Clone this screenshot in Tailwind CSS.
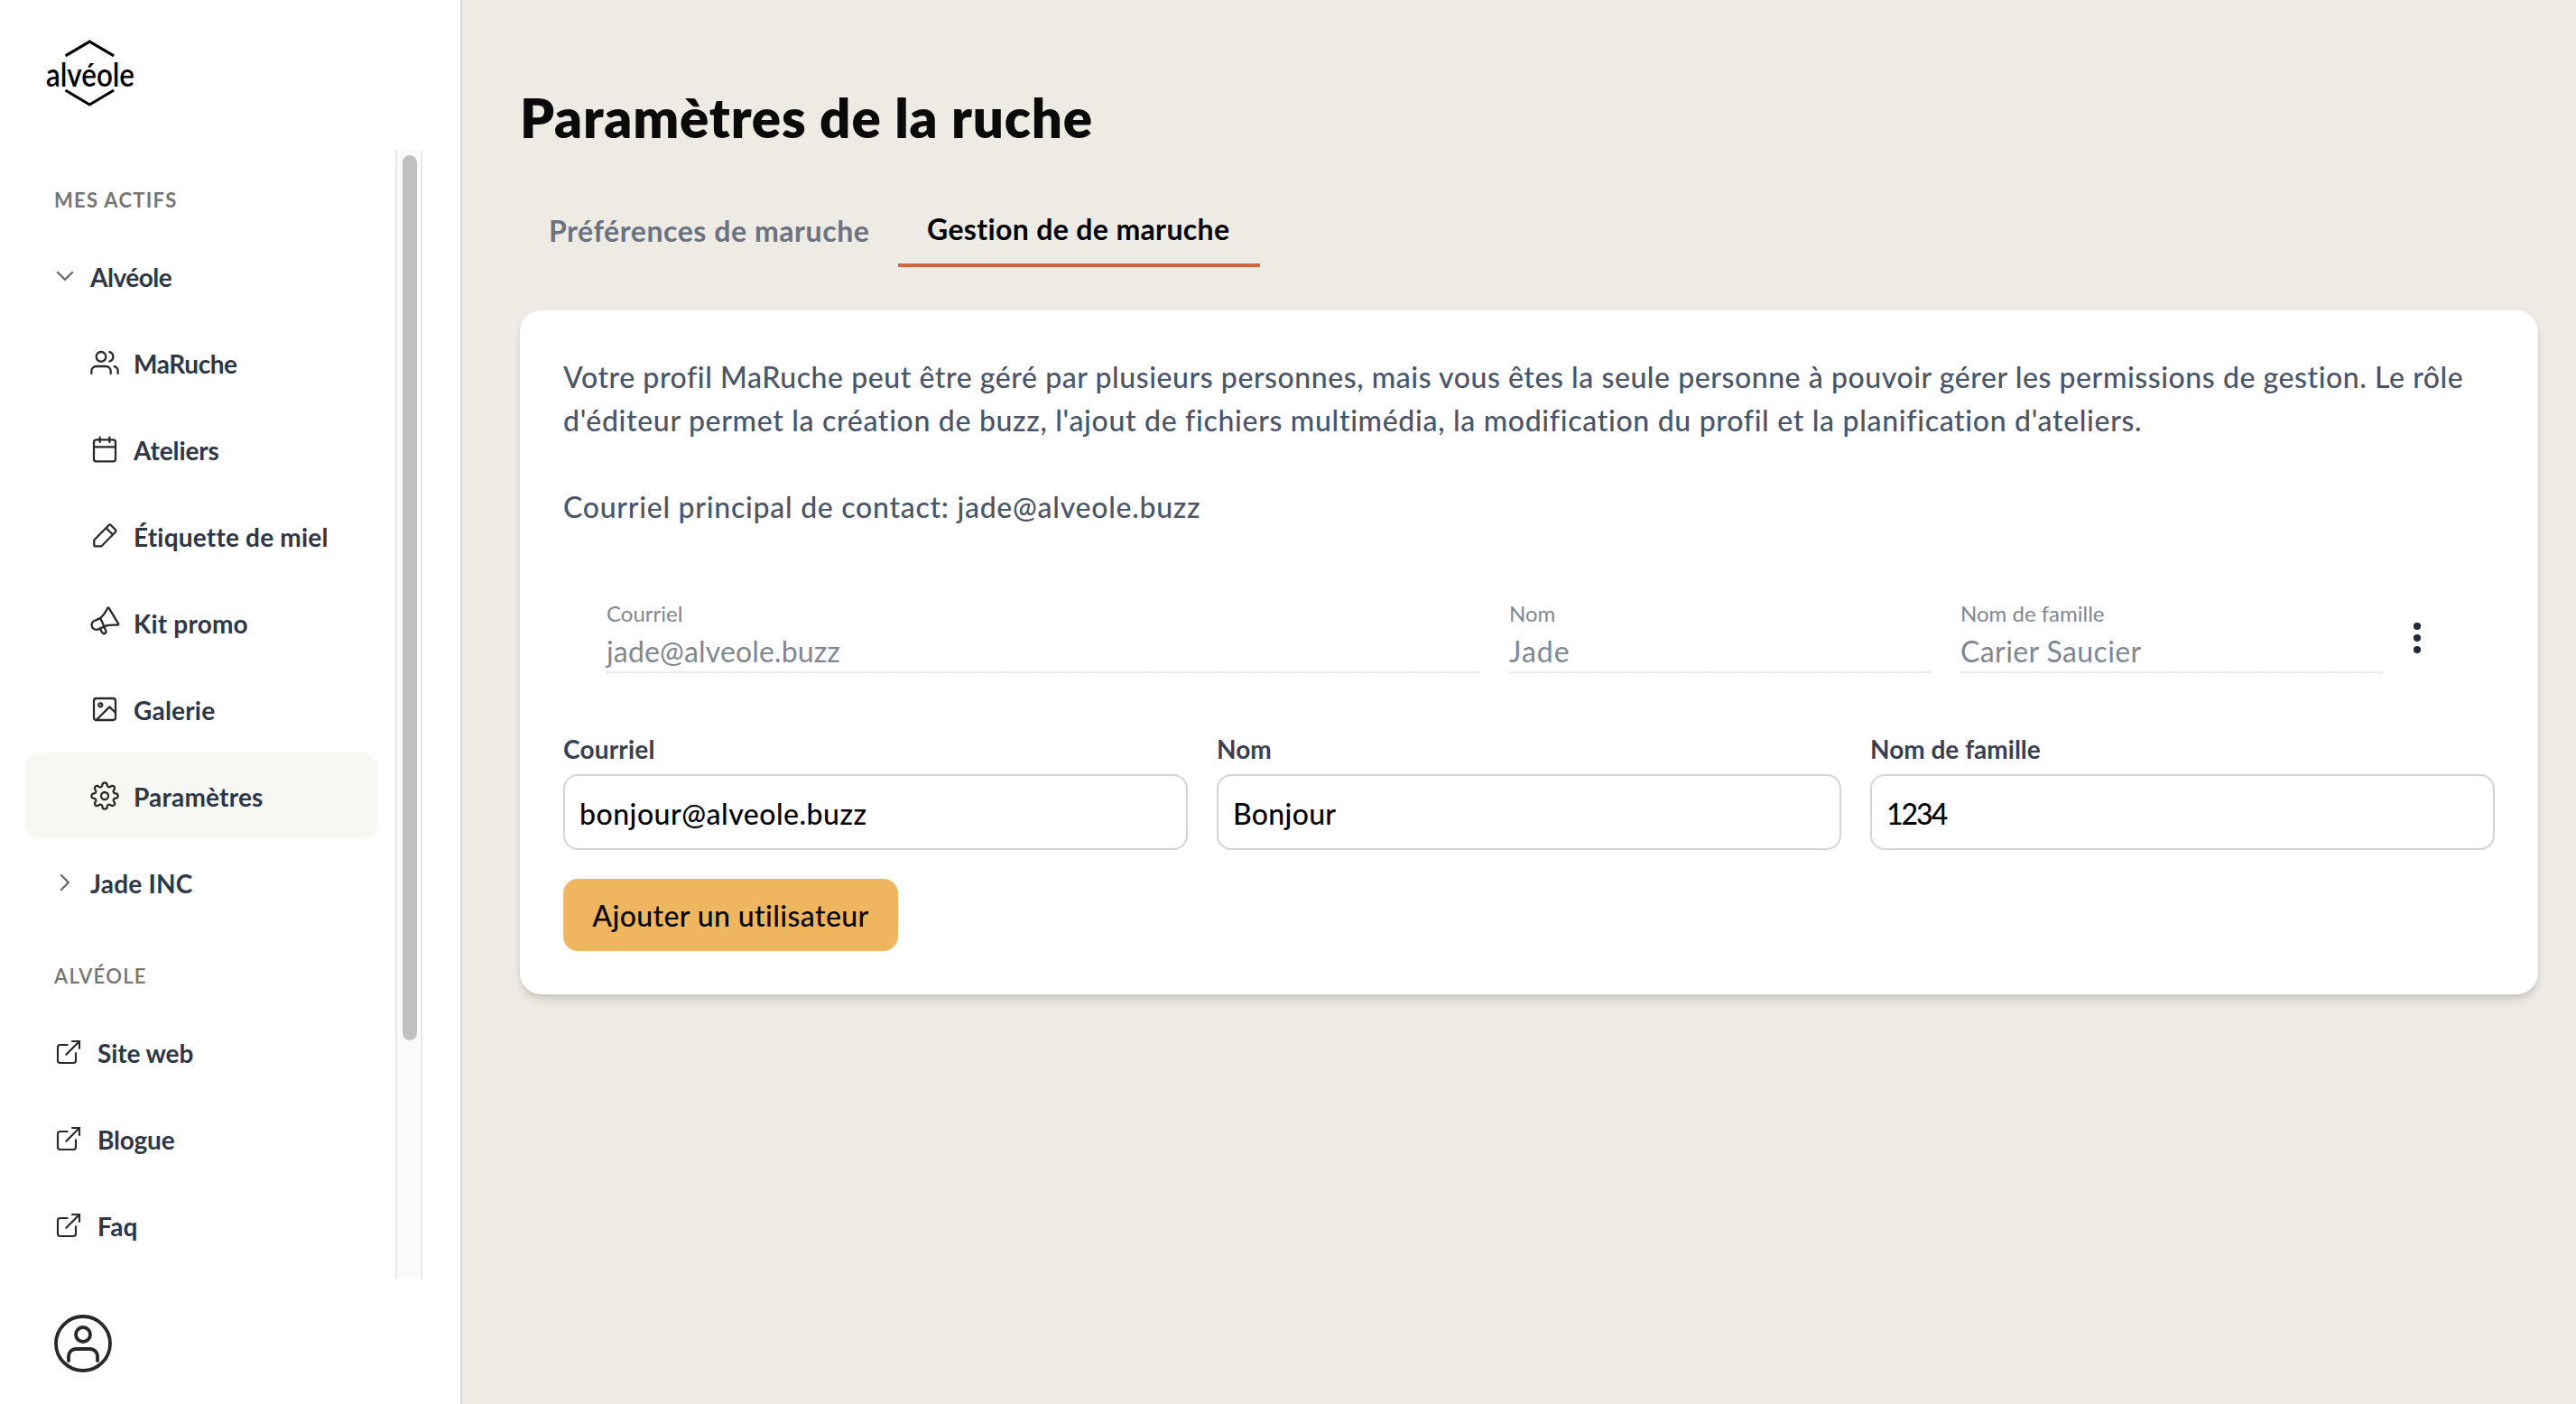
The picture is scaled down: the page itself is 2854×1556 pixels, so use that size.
<!DOCTYPE html>
<html lang="fr">
<head>
  <meta charset="UTF-8" />
  <meta name="viewport" content="width=device-width, initial-scale=1.0" />
  <title>Paramètres de la ruche</title>
  <script src="https://cdn.jsdelivr.net/npm/@tailwindcss/browser@4"></script>
</head>
<body class="flex h-screen overflow-hidden bg-[#eeebe4] font-['Lato',sans-serif]">

  <!-- Sidebar -->
  <aside class="flex flex-col w-[512px] h-full shrink-0 bg-white border-r-2 border-[#d9d9d9]">
    <div class="h-[166px] shrink-0 pl-12 pt-10">
      <svg class="w-[104px] h-20 overflow-visible" viewBox="0 0 104 80" fill="none" stroke="#000" stroke-width="3.2">
        <path d="M24.5 21.8 51.3 6l26.8 15.8M24.5 60 51.3 76l26.8-16" />
        <text x="3" y="56" font-size="36" font-weight="600" fill="#000" stroke="none" textLength="98" lengthAdjust="spacingAndGlyphs">alvéole</text>
      </svg>
    </div>

    <div class="flex h-[1251px] shrink-0">
      <nav class="w-[438px] pl-7 pr-5 text-[28px] font-bold text-[#2d3748] tracking-[0.2px] [&_a]:pt-0.5 [&_svg]:-mt-0.5">
        <h2 class="h-[92px] pt-10 pl-8 text-[22px] leading-8 font-bold text-[#757575] tracking-[1.3px]">MES ACTIFS</h2>
        <a class="flex items-center h-24 pl-8 gap-4 tracking-[-0.5px]">
          <svg class="size-6" viewBox="0 0 24 24" fill="none" stroke="#6b6b6b" stroke-width="2.3"><path d="m3.3 7.2 8.7 8.6 8.7-8.6" /></svg>
          Alvéole
        </a>
        <a class="flex items-center h-24 pl-18 gap-4 tracking-[-0.4px]">
          <svg class="size-8" viewBox="0 0 24 24" fill="none" stroke="#282828" stroke-width="1.7" stroke-linecap="round" stroke-linejoin="round"><path d="M17 21v-2a4 4 0 0 0-4-4H5a4 4 0 0 0-4 4v2" /><circle cx="9" cy="7" r="4" /><path d="M23 21v-2a4 4 0 0 0-3-3.87M16 3.13a4 4 0 0 1 0 7.75" /></svg>
          MaRuche
        </a>
        <a class="flex items-center h-24 pl-18 gap-4 tracking-[-0.1px]">
          <svg class="size-8" viewBox="0 0 24 24" fill="none" stroke="#282828" stroke-width="1.7" stroke-linecap="round" stroke-linejoin="round"><rect x="3" y="4" width="18" height="18" rx="2" /><path d="M16 2v4M8 2v4M3 10h18" /></svg>
          Ateliers
        </a>
        <a class="flex items-center h-24 pl-18 gap-4">
          <svg class="size-8" viewBox="0 0 32 32" fill="none" stroke="#282828" stroke-width="2.2" stroke-linecap="round" stroke-linejoin="round"><path d="M4.3 20.5 20.6 3.9a1.6 1.6 0 0 1 2.2 0l5.2 5.3a1.6 1.6 0 0 1 0 2.2L12.2 27.4H5.8a1.5 1.5 0 0 1-1.5-1.5zM17.7 7.3l7 7" /></svg>
          Étiquette de miel
        </a>
        <a class="flex items-center h-24 pl-18 gap-4">
          <svg class="size-8 overflow-visible" viewBox="0 0 32 32" fill="none" stroke="#282828" stroke-width="2.3" stroke-linecap="round" stroke-linejoin="round"><path d="M19.3-.2a.8.8 0 0 1 1.4 0l10.5 17.6a.8.8 0 0 1-.7 1.2c-5 0-8.5-.4-12.5.8L9.5 23a5.2 5.2 0 1 1-3.3-9.6l4.8-2.3C15 8 17 4 19.3-.2zM11.5 11.7l3.9 8.5M11.2 23.3l2.1 3.9a2.3 2.3 0 0 0 4-2.2l-2-4" /></svg>
          Kit promo
        </a>
        <a class="flex items-center h-24 pl-18 gap-4">
          <svg class="size-8" viewBox="0 0 24 24" fill="none" stroke="#282828" stroke-width="1.7" stroke-linecap="round" stroke-linejoin="round"><rect x="3" y="3" width="18" height="18" rx="2" /><circle cx="8.5" cy="8.5" r="1.5" /><path d="m21 15-5-5L5 21" /></svg>
          Galerie
        </a>
        <a class="flex items-center h-24 pl-18 gap-4 bg-[#f7f7f3] rounded-2xl">
          <svg class="size-8" viewBox="0 0 24 24" fill="none" stroke="#282828" stroke-width="1.7" stroke-linecap="round" stroke-linejoin="round"><circle cx="12" cy="12" r="3" /><path d="M19.4 15a1.65 1.65 0 0 0 .33 1.82l.06.06a2 2 0 0 1 0 2.83 2 2 0 0 1-2.83 0l-.06-.06a1.65 1.65 0 0 0-1.82-.33 1.65 1.65 0 0 0-1 1.51V21a2 2 0 0 1-2 2 2 2 0 0 1-2-2v-.09A1.65 1.65 0 0 0 9 19.4a1.65 1.65 0 0 0-1.82.33l-.06.06a2 2 0 0 1-2.83 0 2 2 0 0 1 0-2.83l.06-.06a1.65 1.65 0 0 0 .33-1.82 1.65 1.65 0 0 0-1.51-1H3a2 2 0 0 1-2-2 2 2 0 0 1 2-2h.09A1.65 1.65 0 0 0 4.6 9a1.65 1.65 0 0 0-.33-1.82l-.06-.06a2 2 0 0 1 0-2.83 2 2 0 0 1 2.83 0l.06.06a1.65 1.65 0 0 0 1.82.33H9a1.65 1.65 0 0 0 1-1.51V3a2 2 0 0 1 2-2 2 2 0 0 1 2 2v.09a1.65 1.65 0 0 0 1 1.51 1.65 1.65 0 0 0 1.82-.33l.06-.06a2 2 0 0 1 2.83 0 2 2 0 0 1 0 2.83l-.06.06a1.65 1.65 0 0 0-.33 1.82V9a1.65 1.65 0 0 0 1.51 1H21a2 2 0 0 1 2 2 2 2 0 0 1-2 2h-.09a1.65 1.65 0 0 0-1.51 1z" /></svg>
          Paramètres
        </a>
        <a class="flex items-center h-24 pl-8 gap-4">
          <svg class="size-6" viewBox="0 0 24 24" fill="none" stroke="#6b6b6b" stroke-width="2.3"><path d="m7.2 3.3 8.6 8.7-8.6 8.7" /></svg>
          Jade INC
        </a>

        <h2 class="h-[92px] pt-10 pl-8 text-[22px] leading-8 font-semibold text-[#757575] tracking-[1.3px]">ALVÉOLE</h2>
        <a class="flex items-center h-24 pl-8 gap-4 tracking-[-0.1px]">
          <svg class="size-8" viewBox="0 0 24 24" fill="none" stroke="#282828" stroke-width="1.6" stroke-linecap="round"><path d="M18 13v6a2 2 0 0 1-2 2H5a2 2 0 0 1-2-2V8a2 2 0 0 1 2-2h6M15 3h6v6M10 14 21 3" /></svg>
          Site web
        </a>
        <a class="flex items-center h-24 pl-8 gap-4 tracking-[-0.2px]">
          <svg class="size-8" viewBox="0 0 24 24" fill="none" stroke="#282828" stroke-width="1.6" stroke-linecap="round"><path d="M18 13v6a2 2 0 0 1-2 2H5a2 2 0 0 1-2-2V8a2 2 0 0 1 2-2h6M15 3h6v6M10 14 21 3" /></svg>
          Blogue
        </a>
        <a class="flex items-center h-24 pl-8 gap-4">
          <svg class="size-8" viewBox="0 0 24 24" fill="none" stroke="#282828" stroke-width="1.6" stroke-linecap="round"><path d="M18 13v6a2 2 0 0 1-2 2H5a2 2 0 0 1-2-2V8a2 2 0 0 1 2-2h6M15 3h6v6M10 14 21 3" /></svg>
          Faq
        </a>
      </nav>

      <!-- Scrollbar -->
      <div class="w-[30px] py-1.5 px-1.5 bg-[#fafafa] border-x-2 border-[#e8e8e8]">
        <div class="w-4 h-[981px] rounded-full bg-[#c1c1c1]"></div>
      </div>
    </div>

    <div class="pl-15 pt-10">
      <svg class="size-16" viewBox="0 0 64 64" fill="none" stroke="#282828" stroke-width="3.8" stroke-linecap="round"><circle cx="32" cy="32" r="30" /><circle cx="32" cy="22" r="8" /><path d="M16 51v-5a8 8 0 0 1 8-8h16a8 8 0 0 1 8 8v5" /></svg>
    </div>
  </aside>

  <!-- Contenu -->
  <main class="flex-1 pl-16 pr-[42px] pt-[94px]">
    <h1 class="h-[118px] text-[60px] leading-[72px] font-extrabold text-[#0a0a0a] tracking-[0.8px]">Paramètres de la ruche</h1>

    <div class="flex h-[84px] text-[32px] font-bold">
      <a class="flex items-center w-[419px] pl-8 pt-[3px] text-[#6b7280] tracking-[0.55px]">Préférences de maruche</a>
      <a class="flex items-center w-[401px] pl-8 pt-[3px] text-black border-b-4 border-[#d06443] tracking-[0.35px]">Gestion de de maruche</a>
    </div>

    <section class="mt-12 p-12 pt-[50px] bg-white rounded-[24px] shadow-[0_8px_12px_-2px_rgba(0,0,0,0.1),0_4px_8px_-2px_rgba(0,0,0,0.1)]">
      <p class="text-[32px] leading-[48px] font-medium text-[#4a5568] whitespace-nowrap">
        <span class="tracking-[0.56px]">Votre profil MaRuche peut être géré par plusieurs personnes, mais vous êtes la seule personne à pouvoir gérer les permissions de gestion. Le rôle</span><br>
        <span class="tracking-[0.68px]">d'éditeur permet la création de buzz, l'ajout de fichiers multimédia, la modification du profil et la planification d'ateliers.</span>
      </p>
      <p class="mt-12 text-[32px] leading-[48px] font-medium text-[#4a5568] tracking-[0.73px]">Courriel principal de contact: jade@alveole.buzz</p>

      <div class="flex mt-[78px] pl-12 text-[#7f8793]">
        <div class="grid grid-cols-4 gap-x-8 w-[1968px]">
          <div class="col-span-2 border-b-2 border-dotted border-[#dfe1e4]">
            <p class="text-[24px] leading-8">Courriel</p>
            <p class="pt-[3px] text-[32px] leading-[45px] tracking-[0.15px]">jade@alveole.buzz</p>
          </div>
          <div class="border-b-2 border-dotted border-[#dfe1e4]">
            <p class="text-[24px] leading-8">Nom</p>
            <p class="pt-[3px] text-[32px] leading-[45px] tracking-[1px]">Jade</p>
          </div>
          <div class="border-b-2 border-dotted border-[#dfe1e4]">
            <p class="text-[24px] leading-8">Nom de famille</p>
            <p class="pt-[3px] text-[32px] leading-[45px] tracking-[0.4px]">Carier Saucier</p>
          </div>
        </div>
        <svg class="w-[76px] h-[82px]" viewBox="0 0 76 82" fill="#1f2937"><circle cx="38" cy="30" r="4" /><circle cx="38" cy="43" r="4" /><circle cx="38" cy="56" r="4" /></svg>
      </div>

      <div class="grid grid-cols-3 gap-8 mt-16">
        <label class="flex flex-col gap-2 text-[28px] leading-10 font-bold text-[#374151] tracking-[0.2px]">
          Courriel
          <input type="text" value="bonjour@alveole.buzz" class="h-[84px] px-4 pt-0.5 border-2 border-[#d1d5db] rounded-2xl text-[32px] font-medium text-black tracking-[0.5px]" />
        </label>
        <label class="flex flex-col gap-2 text-[28px] leading-10 font-bold text-[#374151]">
          Nom
          <input type="text" value="Bonjour" class="h-[84px] px-4 pt-0.5 border-2 border-[#d1d5db] rounded-2xl text-[32px] font-medium text-black tracking-[0.3px]" />
        </label>
        <label class="flex flex-col gap-2 text-[28px] leading-10 font-bold text-[#374151]">
          Nom de famille
          <input type="text" value="1234" class="h-[84px] px-4 pt-0.5 border-2 border-[#d1d5db] rounded-2xl text-[32px] font-medium text-black tracking-[-2px]" />
        </label>
      </div>

      <button class="block mt-8 w-[371px] h-20 pt-0.5 rounded-2xl bg-[#efb65f] text-[32px] font-medium text-black tracking-[0.4px]">Ajouter un utilisateur</button>
    </section>
  </main>
</body>
</html>
